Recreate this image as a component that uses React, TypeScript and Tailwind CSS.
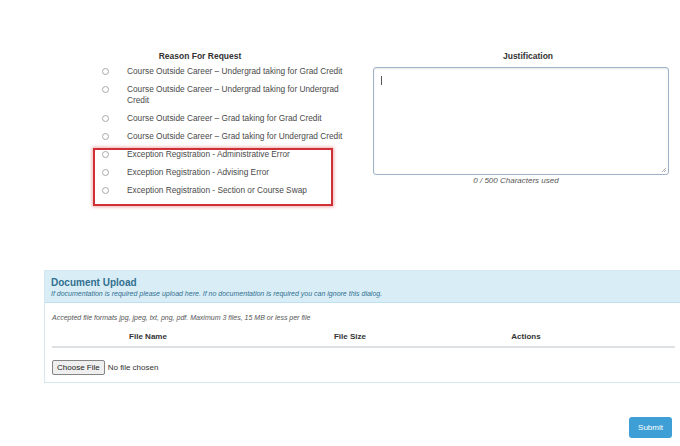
import React from "react";

const reasons = [
  "Course Outside Career – Undergrad taking for Grad Credit",
  "Course Outside Career – Undergrad taking for Undergrad Credit",
  "Course Outside Career – Grad taking for Grad Credit",
  "Course Outside Career – Grad taking for Undergrad Credit",
  "Exception Registration - Administrative Error",
  "Exception Registration - Advising Error",
  "Exception Registration - Section or Course Swap",
];

function Radio({ label }: { label: string }) {
  return (
    <label className="flex items-start">
      <span className="mt-[2px] h-[7px] w-[7px] shrink-0 rounded-full border border-[#a9a9a9] bg-white" />
      <span className="ml-[18px] w-[226px] text-[8.3px] leading-[11px] text-[#4a4a4a]">
        {label}
      </span>
    </label>
  );
}

export default function App() {
  return (
    <div
      className="h-[446px] w-[680px] overflow-hidden bg-white"
      style={{ fontFamily: '"Liberation Sans", Arial, sans-serif' }}
    >
      <div className="flex pl-[102px] pt-[51px]">
        {/* Reason column */}
        <div className="relative w-[258px]">
          <div className="mb-[5px] w-[196px] text-center text-[8.5px] font-bold leading-[10px] text-[#333]">
            Reason For Request
          </div>
          <div className="flex flex-col gap-[7px]">
            {reasons.map((r) => (
              <Radio key={r} label={r} />
            ))}
          </div>
          <div className="pointer-events-none absolute left-[-9px] top-[97px] h-[58px] w-[240px] border-2 border-[#cf3036] shadow-[0_0_3px_1px_rgba(220,80,80,0.45)]" />
        </div>

        {/* Justification column */}
        <div className="ml-[13px] w-[296px]">
          <div className="mb-[6px] pl-[14px] text-center text-[8.5px] font-bold leading-[10px] text-[#333]">
            Justification
          </div>
          <div className="relative h-[108px] w-[296px] rounded-[3px] border border-[#9fb3c8] bg-white shadow-[inset_0_1px_2px_rgba(0,0,0,0.1)]">
            <span className="absolute left-[7px] top-[8px] h-[9px] w-px bg-[#555]" />
            <svg className="absolute bottom-[1px] right-[1px]" width="6" height="6" viewBox="0 0 6 6">
              <path d="M5 1 L1 5 M5 3 L3 5" stroke="#999" strokeWidth="0.8" />
            </svg>
          </div>
          <div className="mt-[1px] pr-[10px] text-center text-[8px] italic leading-[10px] text-[#555]">
            0 / 500 Characters used
          </div>
        </div>
      </div>

      {/* Document upload */}
      <div className="ml-[44px] mt-[74px] w-[640px] border border-[#d4e6ee]">
        <div className="h-[32px] border-b border-[#bfe0ee] bg-[#d9edf7] px-[6px] pt-[6px]">
          <div className="text-[10px] font-bold leading-[12px] text-[#31708f]">
            Document Upload
          </div>
          <div className="text-[7px] italic leading-[10px] text-[#31708f]">
            If documentation is required please upload here. If no documentation is required you can ignore this dialog.
          </div>
        </div>
        <div className="px-[7px] pb-[7px] pt-[10px]">
          <div className="text-[7px] italic leading-[10px] text-[#555]">
            Accepted file formats jpg, jpeg, txt, png, pdf. Maximum 3 files, 15 MB or less per file
          </div>
          <div className="mt-[6px] grid w-[623px] grid-cols-[192px_212px_140px_1fr] border-b-2 border-[#dde1e4] pb-[4px] pt-[3px] text-[8px] font-bold leading-[10px] text-[#333]">
            <div className="text-center">File Name</div>
            <div className="text-center">File Size</div>
            <div className="text-center">Actions</div>
            <div />
          </div>
          <div className="mt-[12px] flex items-center">
            <button className="h-[15px] rounded-[2px] border border-[#858585] bg-[#efefef] px-[4px] text-[8px] leading-[12px] text-[#222]">
              Choose File
            </button>
            <span className="ml-[3px] text-[8px] leading-[10px] text-[#333]">No file chosen</span>
          </div>
        </div>
      </div>

      <div className="mt-[34px] flex justify-end pr-[8px]">
        <button className="h-[21px] w-[43px] rounded-[3px] bg-[#3d9fd6] text-[8px] text-white">
          Submit
        </button>
      </div>
    </div>
  );
}
